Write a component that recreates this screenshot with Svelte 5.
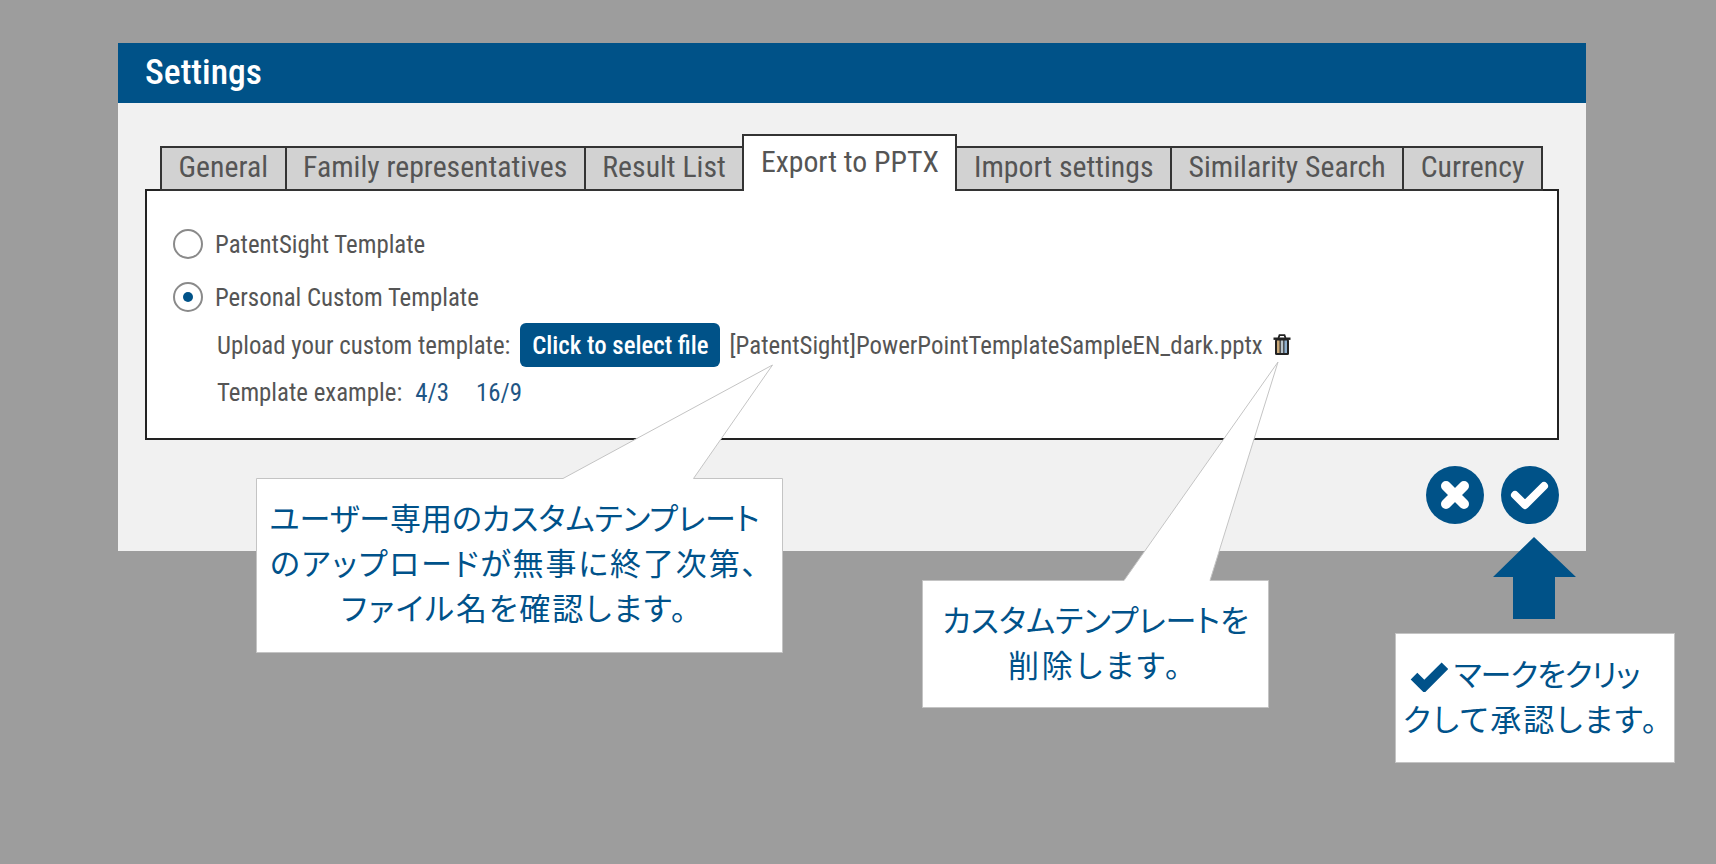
<script>
  const tabs = ['General', 'Family representatives', 'Result List', 'Export to PPTX', 'Import settings', 'Similarity Search', 'Currency'];
  let active = 'Export to PPTX';
</script>

<div class="page">
  <div class="dialog">
    <div class="header">Settings</div>
    <div class="body">
      <div class="tabs">
        {#each tabs as tab}
          <div class="tab" class:active={tab === active}>{tab}</div>
        {/each}
      </div>
      <div class="panel">
        <div class="option">
          <span class="radio"></span>
          <span>PatentSight Template</span>
        </div>
        <div class="option second">
          <span class="radio checked"></span>
          <span>Personal Custom Template</span>
        </div>
        <div class="upload">
          <span>Upload your custom template:</span>
          <button class="select">Click to select file</button>
          <span class="filename">[PatentSight]PowerPointTemplateSampleEN_dark.pptx</span>
          <svg class="trash" viewBox="0 0 20 22" width="20" height="22">
            <path d="M6.5 4 L7.5 1.2 H12.5 L13.5 4" fill="none" stroke="#222" stroke-width="1.8" />
            <rect x="1.5" y="3.5" width="17" height="2.4" fill="#222" />
            <rect x="3" y="5" width="14" height="16" rx="1.5" fill="#222" />
            <rect x="5" y="6.5" width="2.6" height="12.5" fill="#c9a878" />
            <rect x="8.7" y="6.5" width="2.6" height="12.5" fill="#b9c4cc" />
            <rect x="12.4" y="6.5" width="2.6" height="12.5" fill="#8fb0cf" />
          </svg>
        </div>
        <div class="example">
          <span>Template example:</span>
          <span class="link">4/3</span>
          <span class="link">16/9</span>
        </div>
      </div>
      <div class="actions">
        <button class="round" aria-label="Cancel">
          <svg viewBox="0 0 58 58" width="58" height="58">
            <path d="M20 20 L38 38 M38 20 L20 38" stroke="#fff" stroke-width="10" stroke-linecap="round" />
          </svg>
        </button>
        <button class="round" aria-label="Confirm">
          <svg viewBox="0 0 58 58" width="58" height="58">
            <path d="M14 29 L24 39 L43 20" fill="none" stroke="#fff" stroke-width="8" stroke-linecap="round" stroke-linejoin="round" />
          </svg>
        </button>
      </div>
    </div>
  </div>

  <!-- annotations drawn over the dialog -->
  <svg class="overlay" viewBox="0 0 1716 864" width="1716" height="864">
    <path class="bubble" d="M256.5 478.5 H563 L772.5 365 L693.5 478.5 H782.5 V652.5 H256.5 Z" />
    <path class="bubble" d="M922.5 580.5 H1124 L1278 362 L1210 580.5 H1268.5 V707.5 H922.5 Z" />
    <rect class="bubble" x="1395.5" y="633.5" width="279" height="129" />
    <path class="arrow" d="M1534 537 L1576 577 H1555 V619 H1513 V577 H1493 Z" />
  </svg>

  <div class="note note-file">
    <div>ユーザー専用のカスタムテンプレート</div>
    <div class="wide">のアップロードが無事に終了次第、</div>
    <div class="wide">ファイル名を確認します。</div>
  </div>
  <div class="note note-delete">
    <div>カスタムテンプレートを</div>
    <div class="wider">削除します。</div>
  </div>
  <div class="note note-check">
    <div class="tight"><svg class="tick" viewBox="0 0 40 32" width="38" height="30">
      <path d="M4 15 L15 26 L37 4" fill="none" stroke="#00528a" stroke-width="10" />
    </svg>マークをクリッ</div>
    <div class="wide">クして承認します。</div>
  </div>
</div>

<style>
  :global(body) {
    margin: 0;
    background: #9d9d9d;
  }
  .page {
    position: relative;
    width: 1716px;
    height: 864px;
    overflow: hidden;
    padding-top: 43px;
    box-sizing: border-box;
    font-family: "Roboto Condensed", "Liberation Sans Narrow", Roboto, sans-serif;
    font-stretch: condensed;
    color: #555;
  }
  .dialog {
    width: 1468px;
    height: 508px;
    margin-left: 118px;
    background: #f1f1f1;
    display: flex;
    flex-direction: column;
  }
  .header {
    height: 60px;
    padding-left: 27px;
    background: #005288;
    color: #fff;
    font-size: 35.5px;
    line-height: 58px;
    font-weight: 500;
  }
  .body {
    flex: 1;
    padding: 31px 27px 0;
  }
  .tabs {
    display: flex;
    align-items: flex-end;
    height: 55px;
    margin-left: 15px;
    position: relative;
    z-index: 1;
  }
  .tab {
    height: 45px;
    margin-right: -2px;
    margin-bottom: -2px;
    padding: 0 16.55px;
    box-sizing: border-box;
    background: #d2d2d2;
    border: 2px solid #333;
    font-size: 29.75px;
    line-height: 38px;
    white-space: nowrap;
  }
  .tab.active {
    height: 57px;
    border-bottom: 0;
    background: #fff;
    line-height: 52px;
  }
  .panel {
    height: 251px;
    box-sizing: border-box;
    padding: 38px 0 0 26px;
    background: #fff;
    border: 2px solid #222;
    font-size: 24.85px;
  }
  .option {
    display: flex;
    align-items: center;
    gap: 12px;
    height: 30px;
  }
  .option.second {
    margin-top: 23px;
  }
  .radio {
    width: 30px;
    height: 30px;
    box-sizing: border-box;
    border: 2px solid #8a8a8a;
    border-radius: 50%;
    display: flex;
    align-items: center;
    justify-content: center;
  }
  .radio.checked::after {
    content: "";
    width: 10px;
    height: 10px;
    border-radius: 50%;
    background: #005288;
  }
  .upload {
    display: flex;
    align-items: center;
    height: 44px;
    margin-top: 11px;
    margin-left: 44px;
  }
  .select {
    width: 200px;
    height: 44px;
    margin: 0 9px 0 10px;
    padding: 0;
    border: 0;
    border-radius: 6px;
    background: #005288;
    color: #fff;
    font: inherit;
    font-weight: 500;
    font-stretch: condensed;
  }
  .trash {
    margin-left: 9px;
  }
  .example {
    display: flex;
    margin-top: 12px;
    margin-left: 44px;
    line-height: 28px;
  }
  .link {
    margin-left: 13px;
    color: #1f5685;
  }
  .link + .link {
    margin-left: 27px;
  }
  .actions {
    display: flex;
    justify-content: flex-end;
    gap: 17px;
    margin-top: 26px;
  }
  .round {
    width: 58px;
    height: 58px;
    padding: 0;
    border: 0;
    border-radius: 50%;
    background: #005288;
  }
  .round svg {
    display: block;
  }
  .overlay {
    position: absolute;
    top: 0;
    left: 0;
  }
  .bubble {
    fill: #fff;
    stroke: #c4c4c4;
    stroke-width: 1;
  }
  .arrow {
    fill: #005288;
  }
  .note {
    position: absolute;
    font-family: "Noto Sans CJK JP", sans-serif;
    font-stretch: normal;
    font-feature-settings: "palt";
    font-size: 31px;
    font-weight: 400;
    line-height: 45px;
    color: #00528a;
    text-align: center;
    white-space: nowrap;
  }
  .wide {
    letter-spacing: 1.9px;
  }
  .wider {
    letter-spacing: 3px;
  }
  .tight {
    letter-spacing: -1px;
  }
  .note-file {
    left: 251px;
    top: 494px;
    width: 527px;
  }
  .note-delete {
    left: 922px;
    top: 596px;
    width: 347px;
  }
  .note-check {
    left: 1395px;
    top: 650px;
    width: 272px;
    padding-left: 8px;
    text-align: left;
  }
  .tick {
    vertical-align: -6px;
    margin: 0 6px 0 7px;
  }
</style>
